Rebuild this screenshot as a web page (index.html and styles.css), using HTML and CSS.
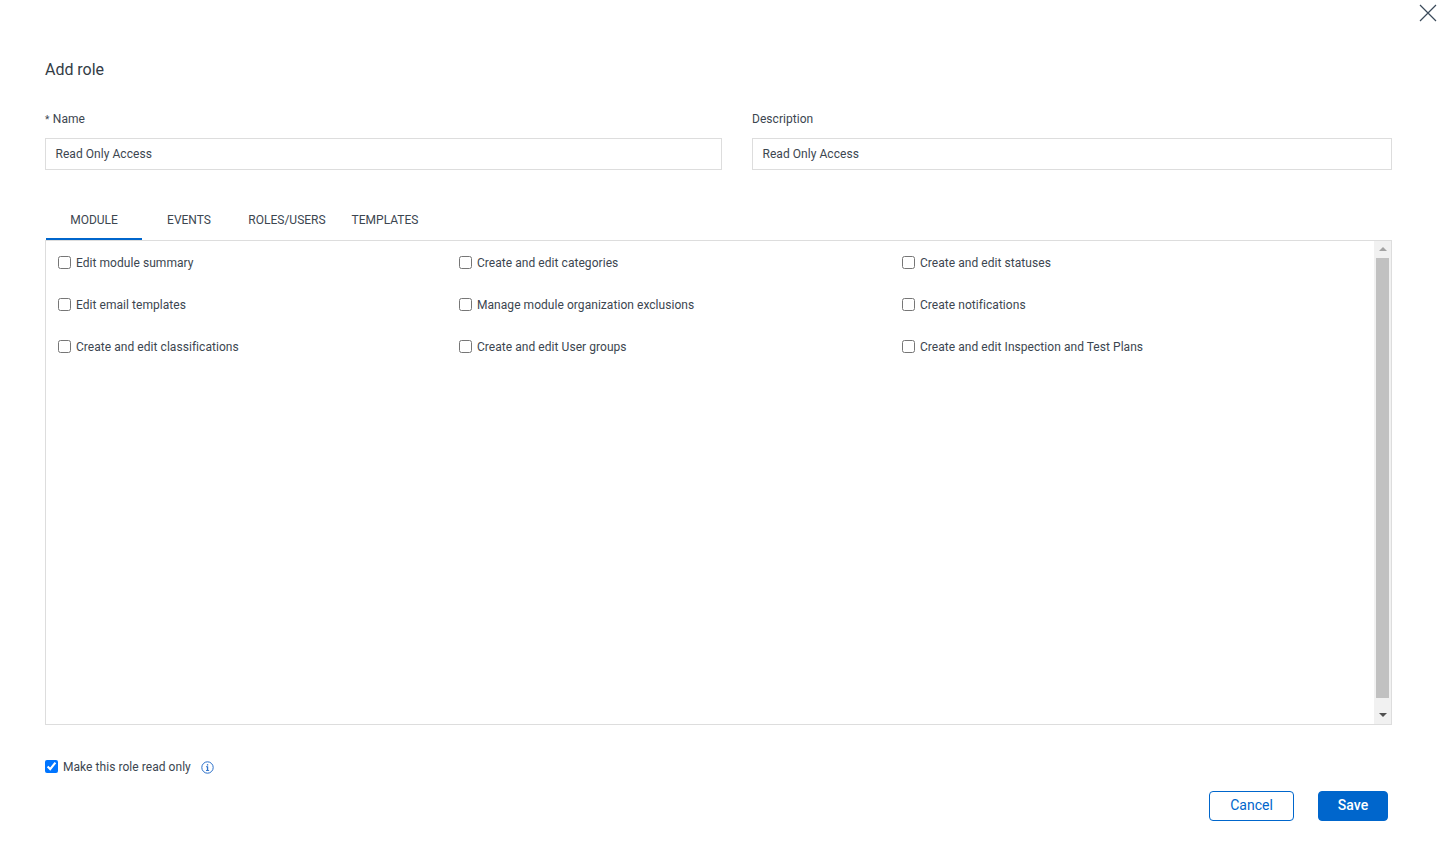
FILE: index.html
```html
<!DOCTYPE html>
<html lang="en">
<head>
<meta charset="utf-8">
<title>Add role</title>
<link rel="stylesheet" href="styles.css">
</head>
<body>
<div class="dialog">
  <button class="close" type="button" aria-label="Close">
    <svg width="18" height="18" viewBox="0 0 18 18"><path d="M1 1 17 17M17 1 1 17" fill="none" stroke="#3a4a5a" stroke-width="1.2"/></svg>
  </button>
  <h1 class="title">Add role</h1>
  <div class="fields">
    <div class="field field-name">
      <label class="label"><span class="req">*</span>Name</label>
      <div class="input">Read Only Access</div>
    </div>
    <div class="field field-desc">
      <label class="label">Description</label>
      <div class="input">Read Only Access</div>
    </div>
  </div>
  <div class="tabs">
    <div class="tab tab-module active">MODULE</div>
    <div class="tab tab-events">EVENTS</div>
    <div class="tab tab-roles">ROLES/USERS</div>
    <div class="tab tab-templates">TEMPLATES</div>
  </div>
  <div class="panel">
    <div class="perms">
      <label class="perm"><input type="checkbox"><span>Edit module summary</span></label>
      <label class="perm"><input type="checkbox"><span>Create and edit categories</span></label>
      <label class="perm"><input type="checkbox"><span>Create and edit statuses</span></label>
      <label class="perm"><input type="checkbox"><span>Edit email templates</span></label>
      <label class="perm"><input type="checkbox"><span>Manage module organization exclusions</span></label>
      <label class="perm"><input type="checkbox"><span>Create notifications</span></label>
      <label class="perm"><input type="checkbox"><span>Create and edit classifications</span></label>
      <label class="perm"><input type="checkbox"><span>Create and edit User groups</span></label>
      <label class="perm"><input type="checkbox"><span>Create and edit Inspection and Test Plans</span></label>
    </div>
    <div class="scrollbar">
      <div class="arrow arrow-up"></div>
      <div class="thumb"></div>
      <div class="arrow arrow-down"></div>
    </div>
  </div>
  <div class="readonly">
    <input type="checkbox" checked>
    <span class="readonly-text">Make this role read only</span>
    <svg class="info" width="13" height="13" viewBox="0 0 13 13"><circle cx="6.5" cy="6.5" r="5.7" fill="none" stroke="#2a6fc9" stroke-width="1"/><rect x="5.9" y="5.4" width="1.3" height="4.2" fill="#2a6fc9"/><rect x="5.9" y="3.2" width="1.3" height="1.3" fill="#2a6fc9"/><rect x="5" y="5.3" width="1.5" height=".9" fill="#2a6fc9"/><rect x="5" y="9" width="3.1" height=".9" fill="#2a6fc9"/></svg>
  </div>
  <div class="actions">
    <button class="btn btn-cancel" type="button">Cancel</button>
    <button class="btn btn-save" type="button">Save</button>
  </div>
</div>
</body>
</html>
```
FILE: styles.css
```css
* { box-sizing: border-box; }
html, body { margin: 0; height: 100%; background: #fff; }
body { font-family: Roboto, "Liberation Sans", sans-serif; font-size: 12px; color: #3c4650; overflow: hidden; }
.dialog { position: relative; width: 1439px; height: 848px; padding: 60px 47px 0 45px; }
.close { position: absolute; top: 4px; right: 2px; width: 18px; height: 18px; padding: 0; border: 0; background: none; display: block; }
.close svg { display: block; }
.title { margin: 0; font-size: 16px; font-weight: 400; line-height: 20px; color: #333c46; letter-spacing: -.02px; }
.fields { display: flex; gap: 30px; margin-top: 29px; }
.field-name { width: 677px; }
.field-desc { flex: 1; }
.label { display: block; line-height: 20px; margin-bottom: 9px; letter-spacing: .05px; }
.req { font-size: 10px; line-height: 0; margin-right: 3.5px; }
.input { height: 32px; border: 1px solid #ddd; padding: 0 9.5px; line-height: 30px; letter-spacing: .05px; }
.tabs { display: flex; margin-top: 30px; height: 41px; padding-left: 1px; border-bottom: 1px solid #ddd; }
.tab { height: 40px; line-height: 40px; text-align: center; color: #3c4650; }
.tab-module { width: 96px; }
.tab-events { width: 94px; }
.tab-roles { width: 102px; }
.tab-templates { width: 94px; }
.tab.active { border-bottom: 2px solid #0066cc; }
.panel { display: flex; height: 484px; border: 1px solid #ddd; border-top: 0; }
.perms { flex: 1; display: grid; grid-template-columns: 401px 443px 1fr; grid-auto-rows: 42px; align-content: start; padding: 1px 0 0 12px; }
.perm { display: flex; align-items: center; height: 42px; letter-spacing: .05px; }
input[type="checkbox"] { width: 13px; height: 13px; margin: 0 0 2px; flex: none; }
.perm span { margin-left: 5px; }
.scrollbar { width: 17px; background: #f1f1f1; display: flex; flex-direction: column; align-items: center; }
.arrow { width: 0; height: 0; border-left: 4px solid transparent; border-right: 4px solid transparent; flex: none; }
.arrow-up { margin: 6px 0 7px; border-bottom: 4px solid #a3a3a3; }
.arrow-down { margin: 15px 0 7px; border-top: 4px solid #505050; }
.thumb { flex: 1; width: 13px; background: #c1c1c1; }
.readonly { display: flex; align-items: center; margin-top: 32px; height: 20px; }
.readonly-text { margin-left: 5px; letter-spacing: .05px; }
.info { margin-left: 10.5px; display: block; }
.actions { display: flex; justify-content: flex-end; gap: 24px; margin-top: 14px; padding-right: 4px; }
.btn { height: 30px; border-radius: 4px; font-family: inherit; font-size: 14px; padding: 0 0 2px; }
.btn-cancel { width: 85px; border: 1px solid #0066cc; background: #fff; color: #0066cc; }
.btn-save { width: 70px; border: 1px solid #0066cc; background: #0066cc; color: #fff; font-weight: 500; }
```
